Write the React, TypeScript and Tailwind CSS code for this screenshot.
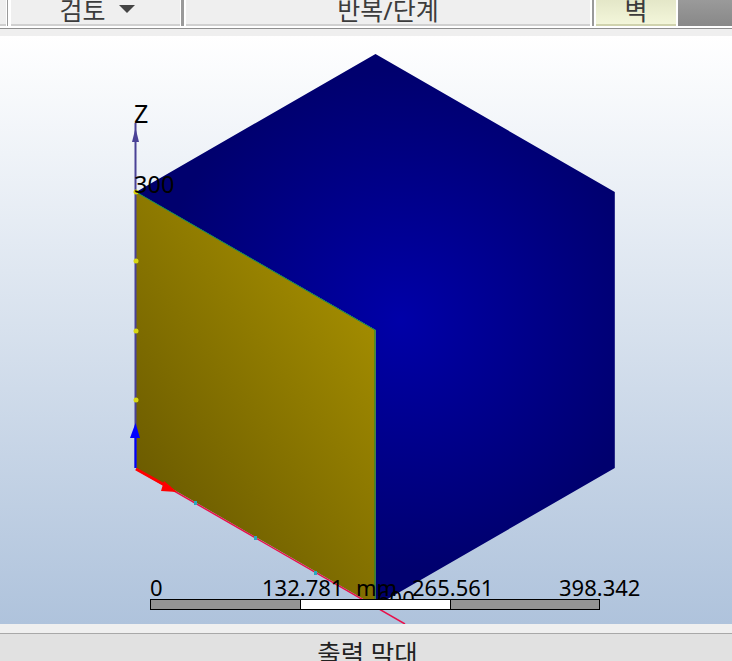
const font = "font-['Noto_Sans',_'Noto_Sans_CJK_KR',sans-serif]";

function Viewport() {
  return (
    <div className="relative h-[588px] overflow-hidden bg-[linear-gradient(#ffffff,#afc3dc)]">
      <svg className="absolute left-0 top-0" width="732" height="588" viewBox="0 36 732 588">
        <defs>
          <radialGradient id="blue" gradientUnits="userSpaceOnUse" cx="400" cy="320" r="250">
            <stop offset="0" stopColor="#0000a8" />
            <stop offset="1" stopColor="#00006e" />
          </radialGradient>
          <linearGradient id="gold" gradientUnits="userSpaceOnUse" x1="375" y1="340" x2="150" y2="510">
            <stop offset="0" stopColor="#a08a00" />
            <stop offset="1" stopColor="#6a5a00" />
          </linearGradient>
        </defs>
        <polygon points="375.5,54 614.8,192 614.8,468 375.5,606 375.5,330 136,192" fill="url(#blue)" />
        <polygon points="136,192 375.5,330 375.5,606 136,468" fill="url(#gold)" />
        <line x1="136" y1="192" x2="375" y2="330" stroke="#0b8a55" strokeWidth="1" />
        <line x1="375" y1="330" x2="375" y2="600" stroke="#0a8a3a" strokeWidth="1" />
        <line x1="135.5" y1="123" x2="135.5" y2="468" stroke="#4a4296" strokeWidth="2" />
        <polygon points="135.5,128 139,142 132,142" fill="#4a4296" />
        {[192, 261, 331, 400].map((y) => (
          <circle key={y} cx="136" cy={y} r="2.5" fill="#d8d810" />
        ))}
        <line x1="135.5" y1="468" x2="135.5" y2="428" stroke="#0000ff" strokeWidth="2" />
        <polygon points="135.5,423 140,438 130,438" fill="#0000ff" />
        <line x1="136" y1="469" x2="405" y2="624" stroke="#e8104a" strokeWidth="1.5" />
        <line x1="136" y1="469" x2="170" y2="488" stroke="#ff0000" strokeWidth="3" />
        <polygon points="177,492 164,481 161,491" fill="#ff0000" />
        {[[195, 503], [255, 538], [315, 573], [376, 608]].map(([x, y]) => (
          <rect key={x} x={x - 1} y={y - 2} width="3" height="4" fill="#2aa8c0" />
        ))}
      </svg>
      <span className="absolute left-[134px] top-[63px] text-[25px] leading-[28px] text-black">Z</span>
      <span className="absolute left-[134px] top-[134px] text-[23.5px] leading-[28px] text-black">300</span>
      <span className="absolute left-[377px] top-[548px] text-[22px] leading-[28px] text-black">600</span>
      <div className="absolute left-[150px] top-[539px] w-[450px]">
        <div className="relative h-[24px] text-[22px] leading-[24px] text-black">
          <span className="absolute left-0 top-0">0</span>
          <span className="absolute left-[112px] top-0">132.781</span>
          <span className="absolute left-[206px] top-0">mm</span>
          <span className="absolute left-[262px] top-0">265.561</span>
          <span className="absolute left-[409px] top-0 whitespace-nowrap">398.342</span>
        </div>
        <div className="flex h-[11px] border border-black bg-[#949494]">
          <div className="w-[149px]" />
          <div className="w-[151px] border-l border-r border-black bg-white" />
        </div>
      </div>
    </div>
  );
}

function Tab({ className, label, caret }: { className: string; label: string; caret?: boolean }) {
  return (
    <div className={`flex h-[26px] items-end justify-center gap-[13px] overflow-hidden border-b-[2px] ${className}`}>
      <span className="whitespace-nowrap text-[25px] leading-[28px] text-[#3c3c3c]">{label}</span>
      {caret && <span className="mb-[11px] h-0 w-0 border-x-[8px] border-t-[8px] border-x-transparent border-t-[#444]" />}
    </div>
  );
}

export default function App() {
  return (
    <div className={`flex h-[661px] w-[732px] flex-col overflow-hidden bg-[#efefef] ${font}`}>
      <div className="flex h-[29px] shrink-0 border-b border-[#8f8f8f] bg-white pb-[2px]">
        <div className="h-[26px] w-[6px] border-b-[2px] border-[#d0d0d0] bg-[#efefef]" />
        <div className="ml-[1px] mr-[3px] h-[26px] w-[1px] bg-[#9a9a9a]" />
        <Tab className="w-[169px] border-[#d0d0d0] bg-[#efefef] pl-[3px]" label="검토" caret />
        <div className="ml-[1px] mr-[2px] h-[26px] w-[3px] bg-[#9a9a9a]" />
        <Tab className="w-[404px] border-[#d0d0d0] bg-[#efefef]" label="반복/단계" />
        <div className="ml-[2px] mr-[2px] h-[26px] w-[2px] bg-[#9a9a9a]" />
        <Tab className="w-[80px] border-[#d0d3ae] bg-[linear-gradient(#e4e7c8,#f3f6da)]" label="벽" />
        <div className="ml-[2px] h-[26px] flex-1 bg-[linear-gradient(#9a9a9a,#888888)]" />
      </div>
      <div className="h-[7px] shrink-0" />
      <Viewport />
      <div className="h-[10px] shrink-0 border-b border-[#a8a8a8] bg-[#efefef]" />
      <div className="flex flex-1 items-start justify-center overflow-hidden bg-[#e1e1e1] pt-[5px]">
        <span className="whitespace-nowrap pl-[3px] text-[25.5px] leading-[28px] text-[#222]">출력 막대</span>
      </div>
    </div>
  );
}
